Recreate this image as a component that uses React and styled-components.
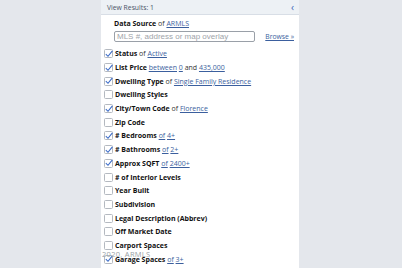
import React from "react";
import styled, { createGlobalStyle } from "styled-components";

const Global = createGlobalStyle`
  html, body { margin: 0; padding: 0; background: #e4e7ec; }
  body { font-family: "Open Sans", "Noto Sans", sans-serif; }
`;

const Page = styled.div`
  width: 402px;
  height: 268px;
  display: flex;
  justify-content: center;
  overflow: hidden;
  background: #e4e7ec;
`;

const Panel = styled.div`
  position: relative;
  width: 198px;
  margin-left: -2px;
  background: #fff;
  display: flex;
  flex-direction: column;
`;

const Header = styled.div`
  height: 14px;
  display: flex;
  align-items: center;
  justify-content: space-between;
  padding: 0 5px 0 6px;
  background: #edf1f5;
  border-bottom: 1px solid #d8dee6;
  font-size: 6.8px;
  color: #4a5566;
`;

const Chevron = styled.span`
  color: #3a66b8;
  font-size: 10px;
  line-height: 1;
`;

const Source = styled.div`
  padding: 3px 4px 0 13px;
  display: flex;
  flex-direction: column;
  gap: 2px;
`;

const SourceTitle = styled.div`
  font-size: 7px;
  line-height: 11px;
`;

const Bold = styled.b`
  font-weight: 700;
  color: #111;
`;

const Of = styled.span`
  color: ${(p) => (p.$link ? "#3b5f9e" : "#333")};
  text-decoration: ${(p) => (p.$link ? "underline" : "none")};
  font-weight: 400;
`;

const InputRow = styled.div`
  display: flex;
  align-items: center;
  justify-content: space-between;
`;

const Input = styled.div`
  width: 135px;
  height: 9px;
  border: 1px solid #9aa0a8;
  border-radius: 2px;
  padding: 0 2px;
  font-family: "Liberation Sans", Arial, sans-serif;
  font-size: 8px;
  line-height: 9px;
  color: #a0a4aa;
  white-space: nowrap;
  overflow: hidden;
`;

const Browse = styled.a`
  font-size: 6.8px;
  color: #3b5f9e;
  text-decoration: underline;
  margin-right: 1px;
`;

const List = styled.div`
  display: flex;
  flex-direction: column;
  padding: 5px 0 0 3px;
`;

const Row = styled.div`
  height: 13.7px;
  display: flex;
  align-items: center;
  gap: 2px;
  font-size: 7px;
  white-space: nowrap;
`;

const Box = styled.span`
  width: 7px;
  height: 7px;
  border: 1px solid #b4b9c0;
  border-radius: 1.5px;
  background: #fff;
  display: flex;
  align-items: center;
  justify-content: center;
  flex: none;
`;

const Watermark = styled.div`
  position: absolute;
  left: 1px;
  top: 249px;
  font-size: 7.5px;
  color: #9a9fa6;
  letter-spacing: 0.3px;
  pointer-events: none;
`;

const Check = () => (
  <svg width="8" height="8" viewBox="0 0 8 8" style={{ overflow: "visible" }}>
    <path d="M0.8 4.2 L3 6.3 L7.4 0.9" fill="none" stroke="#3c6cc8" strokeWidth="1.1" />
  </svg>
);

const rows = [
  { label: "Status", checked: true, parts: [["of", 0], ["Active", 1]] },
  { label: "List Price", checked: true, parts: [["between", 1], ["0", 1], ["and", 0], ["435,000", 1]] },
  { label: "Dwelling Type", checked: true, parts: [["of", 0], ["Single Family Residence", 1]] },
  { label: "Dwelling Styles", checked: false, parts: [] },
  { label: "City/Town Code", checked: true, parts: [["of", 0], ["Florence", 1]] },
  { label: "Zip Code", checked: false, parts: [] },
  { label: "# Bedrooms", checked: true, parts: [["of", 1], ["4+", 1]] },
  { label: "# Bathrooms", checked: true, parts: [["of", 1], ["2+", 1]] },
  { label: "Approx SQFT", checked: true, parts: [["of", 1], ["2400+", 1]] },
  { label: "# of Interior Levels", checked: false, parts: [] },
  { label: "Year Built", checked: false, parts: [] },
  { label: "Subdivision", checked: false, parts: [] },
  { label: "Legal Description (Abbrev)", checked: false, parts: [] },
  { label: "Off Market Date", checked: false, parts: [] },
  { label: "Carport Spaces", checked: false, parts: [] },
  { label: "Garage Spaces", checked: true, parts: [["of", 1], ["3+", 1]] },
];

const Label = ({ label, parts }) => (
  <span>
    <Bold>{label}</Bold>
    {parts.map(([t, l], i) => (
      <React.Fragment key={i}>
        {" "}
        <Of $link={!!l}>{t}</Of>
      </React.Fragment>
    ))}
  </span>
);

export default function App() {
  return (
    <Page>
      <Global />
      <Panel>
        <Header>
          <span>View Results: 1</span>
          <Chevron>‹</Chevron>
        </Header>
        <Source>
          <SourceTitle>
            <Bold>Data Source</Bold> <Of>of</Of> <Of $link>ARMLS</Of>
          </SourceTitle>
          <InputRow>
            <Input>MLS #, address or map overlay</Input>
            <Browse>Browse »</Browse>
          </InputRow>
        </Source>
        <List>
          {rows.map((r) => (
            <Row key={r.label}>
              <Box>{r.checked && <Check />}</Box>
              <Label label={r.label} parts={r.parts} />
            </Row>
          ))}
        </List>
        <Watermark>2020, ARMLS</Watermark>
      </Panel>
    </Page>
  );
}
